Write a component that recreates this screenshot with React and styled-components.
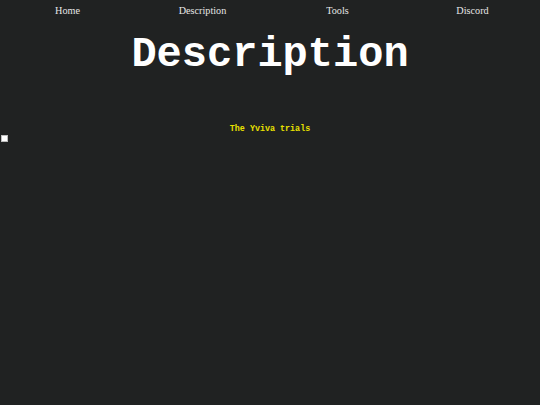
import React from "react";
import styled, { createGlobalStyle } from "styled-components";

const Global = createGlobalStyle`
  html, body { margin: 0; padding: 0; background: #202222; }
  body { width: 540px; height: 405px; overflow: hidden; font-family: "Liberation Serif", serif; }
`;

const Nav = styled.nav`
  display: grid;
  grid-template-columns: repeat(4, 1fr);
  padding-top: 5px;
`;

const NavLink = styled.a`
  text-align: center;
  color: #e6e6e6;
  font-family: "Liberation Serif", serif;
  font-size: 10.2px;
  line-height: 12px;
  text-decoration: none;
`;

const Title = styled.h1`
  margin: 14px 0 0;
  text-align: center;
  color: #ffffff;
  font-family: "Courier New", Courier, "Liberation Mono", monospace;
  font-weight: bold;
  font-size: 42px;
  line-height: 48px;
`;

const Subtitle = styled.p`
  margin: 45px 0 0;
  text-align: center;
  color: #e8e000;
  font-family: "Courier New", Courier, "Liberation Mono", monospace;
  font-weight: bold;
  font-size: 8.4px;
  line-height: 10px;
`;

const Marker = styled.div`
  width: 5px;
  height: 5px;
  margin: 1px 0 0 1px;
  background: #ffffff;
  border: 0.5px solid #bbbbbb;
`;

export default function App() {
  return (
    <>
      <Global />
      <Nav>
        <NavLink href="#">Home</NavLink>
        <NavLink href="#">Description</NavLink>
        <NavLink href="#">Tools</NavLink>
        <NavLink href="#">Discord</NavLink>
      </Nav>
      <Title>Description</Title>
      <Subtitle>The Yviva trials</Subtitle>
      <Marker />
    </>
  );
}
